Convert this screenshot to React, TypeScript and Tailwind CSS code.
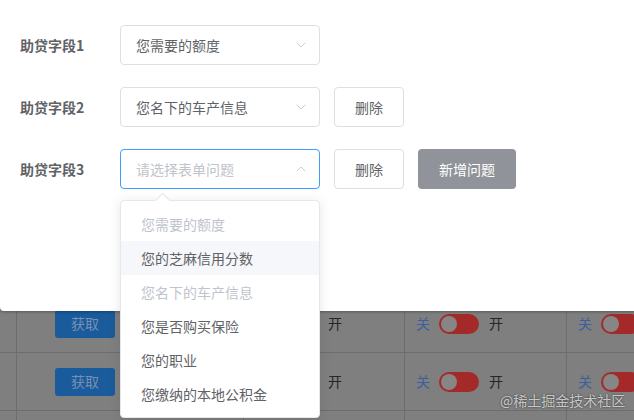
import { ChevronDown, ChevronUp } from 'lucide-react';

const fields = [
  { label: '助贷字段1', value: '您需要的额度', del: false, add: false, open: false },
  { label: '助贷字段2', value: '您名下的车产信息', del: true, add: false, open: false },
  { label: '助贷字段3', value: '', del: true, add: true, open: true },
];

const options = [
  { text: '您需要的额度', disabled: true },
  { text: '您的芝麻信用分数', hover: true },
  { text: '您名下的车产信息', disabled: true },
  { text: '您是否购买保险' },
  { text: '您的职业' },
  { text: '您缴纳的本地公积金' },
];

function Toggle() {
  return (
    <div className="flex items-center">
      <span className="text-[14px] text-[#3b5f9e] w-[23px]">关</span>
      <div className="w-[40px] h-[20px] rounded-full bg-[#a42a2a] flex items-center pl-[2px]">
        <div className="w-[16px] h-[16px] rounded-full bg-[#868686]" />
      </div>
      <span className="text-[14px] text-[#262626] ml-[10px]">开</span>
    </div>
  );
}

function TableRow() {
  return (
    <div className="grid grid-cols-[17px_227px_161px_162px_1fr] h-[58px] border-b border-[#6d6d6d]">
      <div className="border-r border-[#6d6d6d]" />
      <div className="border-r border-[#6d6d6d] flex items-center pl-[38px]">
        <div className="w-[60px] h-[28px] rounded-[3px] bg-[#1a5b9c] text-[#7591b2] text-[14px] flex items-center justify-center">
          获取
        </div>
      </div>
      <div className="border-r border-[#6d6d6d] flex items-center pl-[11px]">
        <Toggle />
      </div>
      <div className="border-r border-[#6d6d6d] flex items-center pl-[11px]">
        <Toggle />
      </div>
      <div className="flex items-center pl-[11px]">
        <Toggle />
      </div>
    </div>
  );
}

export default function App() {
  return (
    <div
      className="relative w-[634px] h-[420px] overflow-hidden bg-[#7f7f7f]"
      style={{ fontFamily: '"Noto Sans CJK SC", "Liberation Sans", sans-serif' }}
    >
      {/* page behind the mask */}
      <div className="pt-[295px]">
        <TableRow />
        <TableRow />
        <TableRow />
      </div>

      {/* dialog */}
      <div className="absolute left-0 top-0 w-[680px] h-[311px] bg-white rounded-b-[4px] shadow-[0_1px_3px_rgba(0,0,0,0.3)]">
        <div className="flex flex-col gap-[22px] pt-[25px] pl-[20px]">
          {fields.map((f) => (
            <div key={f.label} className="flex items-center h-[40px]">
              <div className="w-[100px] text-[14px] font-bold text-[#606266]">{f.label}</div>
              <div
                className={`w-[200px] h-[40px] rounded-[4px] border flex items-center justify-between pl-[15px] pr-[10px] text-[14px] ${
                  f.open ? 'border-[#409eff]' : 'border-[#dcdfe6]'
                }`}
              >
                <span className={f.value ? 'text-[#606266]' : 'text-[#c0c4cc]'}>
                  {f.value || '请选择表单问题'}
                </span>
                {f.open ? (
                  <ChevronUp size={16} strokeWidth={1.3} className="text-[#c0c4cc]" />
                ) : (
                  <ChevronDown size={16} strokeWidth={1.3} className="text-[#c0c4cc]" />
                )}
              </div>
              {f.del && (
                <div className="ml-[14px] w-[70px] h-[40px] rounded-[4px] border border-[#dcdfe6] text-[14px] text-[#606266] flex items-center justify-center">
                  删除
                </div>
              )}
              {f.add && (
                <div className="ml-[14px] w-[98px] h-[40px] rounded-[4px] bg-[#909399] text-[14px] text-white flex items-center justify-center">
                  新增问题
                </div>
              )}
            </div>
          ))}
        </div>
      </div>

      {/* select dropdown */}
      <div className="absolute left-[120px] top-[200px] w-[200px] bg-white border border-[#e4e7ed] rounded-[4px] shadow-[0_2px_12px_rgba(0,0,0,0.1)] py-[6px]">
        <div className="absolute -top-[6px] left-[36px] w-[11px] h-[11px] rotate-45 bg-white border-l border-t border-[#e4e7ed]" />
        {options.map((o) => (
          <div
            key={o.text}
            className={`relative h-[34px] px-[20px] flex items-center text-[14px] ${
              o.disabled ? 'text-[#c0c4cc]' : 'text-[#606266]'
            } ${o.hover ? 'bg-[#f5f7fa]' : ''}`}
          >
            {o.text}
          </div>
        ))}
      </div>

      {/* watermark */}
      <div className="absolute left-[500px] top-[390px] whitespace-nowrap text-[14px] text-white/70 [text-shadow:0_0_2px_rgba(0,0,0,0.7)]">
        @稀土掘金技术社区
      </div>
    </div>
  );
}
